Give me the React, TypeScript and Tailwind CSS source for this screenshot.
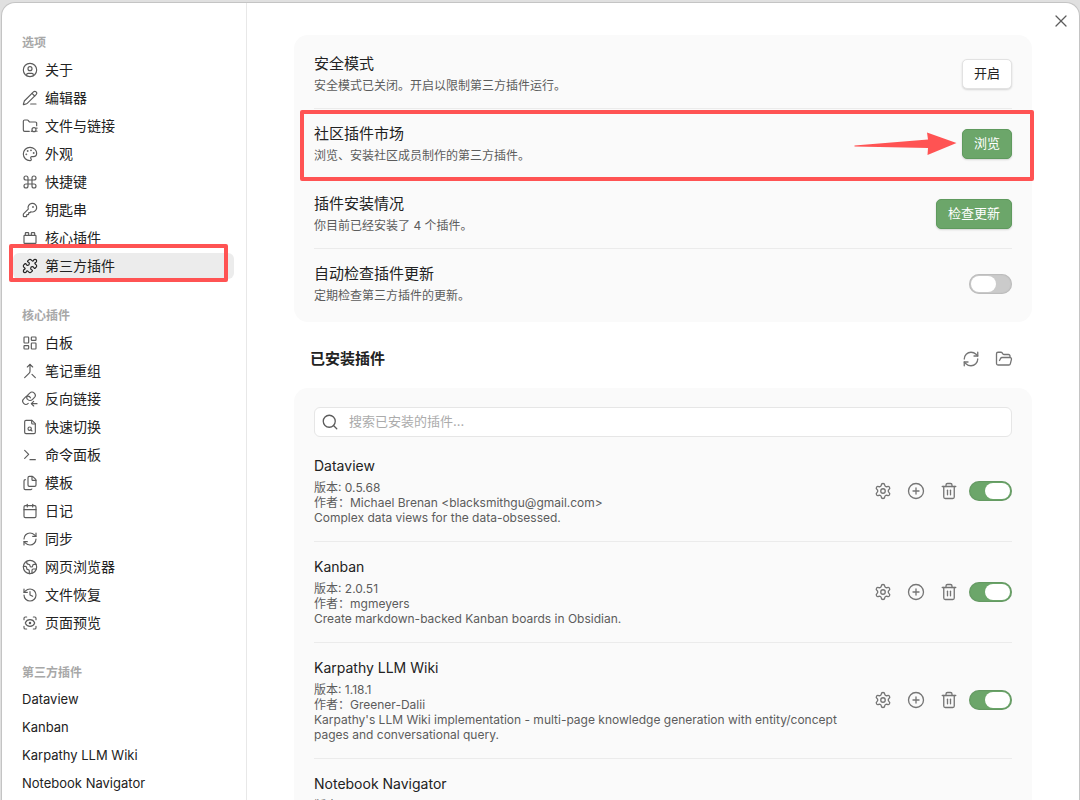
import React from "react";
import {
  Calendar,
  CirclePlus,
  CircleUser,
  Command,
  Earth,
  Files,
  FolderOpen,
  History,
  KeyRound,
  LayoutDashboard,
  Merge,
  Palette,
  PencilLine,
  Puzzle,
  RefreshCw,
  ScanEye,
  Search,
  Settings,
  Terminal,
  ToyBrick,
  Trash2,
  X,
} from "lucide-react";

interface IconProps {
  size?: number;
  strokeWidth?: number;
  className?: string;
}

type IconType = React.ComponentType<IconProps>;

function StrokeIcon({ size = 16, strokeWidth = 1.75, className, children }: IconProps & { children: React.ReactNode }) {
  return (
    <svg
      width={size}
      height={size}
      viewBox="0 0 24 24"
      fill="none"
      stroke="currentColor"
      strokeWidth={strokeWidth}
      strokeLinecap="round"
      strokeLinejoin="round"
      className={className}
      aria-hidden="true"
    >
      {children}
    </svg>
  );
}

function LinksIncoming(props: IconProps) {
  return (
    <StrokeIcon {...props}>
      <path d="M8.300 12.400a4.800 4.800 0 0 0 7.200.500l2.900-2.900a4.800 4.800 0 0 0-6.800-6.800l-3.100 3.100a4.800 4.800 0 0 0-.8 5.500" />
      <path d="M12.700 10.200a4.800 4.800 0 0 0-7.600-1.100L2.600 11.700a4.800 4.800 0 0 0 6.700 6.900" />
      <path d="M22.500 19h-8" />
      <path d="m17.500 15.500-3.500 3.500 3.500 3.500" />
    </StrokeIcon>
  );
}

function FolderRing(props: IconProps) {
  return (
    <StrokeIcon {...props}>
      <path d="M11 20H4a2 2 0 0 1-2-2V5a2 2 0 0 1 2-2h3.900a2 2 0 0 1 1.700.9l.8 1.200a2 2 0 0 0 1.700.9H20a2 2 0 0 1 2 2v3.500" />
      <circle cx="18" cy="17.500" r="3" />
      <path d="M22.300 14.800v.8" />
      <path d="M14 19.800v.4" />
      <path d="M22.300 19.800v.4" />
    </StrokeIcon>
  );
}

function FileLens(props: IconProps) {
  return (
    <StrokeIcon {...props}>
      <path d="M15 2H6a2 2 0 0 0-2 2v16a2 2 0 0 0 2 2h12a2 2 0 0 0 2-2V7Z" />
      <path d="M14.500 2v4a1.500 1.500 0 0 0 1.500 1.500h4" />
      <circle cx="11.500" cy="14.500" r="2.500" />
      <path d="M13.300 16.300 15 18" />
    </StrokeIcon>
  );
}

interface NavItem {
  label: string;
  icon?: IconType;
  active?: boolean;
}

const sections: { title: string; items: NavItem[] }[] = [
  {
    title: "选项",
    items: [
      { label: "关于", icon: CircleUser },
      { label: "编辑器", icon: PencilLine },
      { label: "文件与链接", icon: FolderRing },
      { label: "外观", icon: Palette },
      { label: "快捷键", icon: Command },
      { label: "钥匙串", icon: KeyRound },
      { label: "核心插件", icon: ToyBrick },
      { label: "第三方插件", icon: Puzzle, active: true },
    ],
  },
  {
    title: "核心插件",
    items: [
      { label: "白板", icon: LayoutDashboard },
      { label: "笔记重组", icon: Merge },
      { label: "反向链接", icon: LinksIncoming },
      { label: "快速切换", icon: FileLens },
      { label: "命令面板", icon: Terminal },
      { label: "模板", icon: Files },
      { label: "日记", icon: Calendar },
      { label: "同步", icon: RefreshCw },
      { label: "网页浏览器", icon: Earth },
      { label: "文件恢复", icon: History },
      { label: "页面预览", icon: ScanEye },
    ],
  },
  {
    title: "第三方插件",
    items: [
      { label: "Dataview" },
      { label: "Kanban" },
      { label: "Karpathy LLM Wiki" },
      { label: "Notebook Navigator" },
    ],
  },
];

const plugins = [
  {
    name: "Dataview",
    version: "0.5.68",
    author: "Michael Brenan <blacksmithgu@gmail.com>",
    description: "Complex data views for the data-obsessed.",
  },
  {
    name: "Kanban",
    version: "2.0.51",
    author: "mgmeyers",
    description: "Create markdown-backed Kanban boards in Obsidian.",
  },
  {
    name: "Karpathy LLM Wiki",
    version: "1.18.1",
    author: "Greener-Dalii",
    description:
      "Karpathy's LLM Wiki implementation - multi-page knowledge generation with entity/concept pages and conversational query.",
  },
  {
    name: "Notebook Navigator",
    version: "2.5.6",
    author: "Johan Sanneblad",
    description:
      "Replace the default file explorer with a clean two-pane interface featuring folder tree, tag browsing, file previews, keyboard navigation, drag-and-drop, pinned notes, and customizable display options.",
  },
];

function Toggle({ label, defaultChecked = false }: { label: string; defaultChecked?: boolean }) {
  return (
    <input
      type="checkbox"
      role="switch"
      aria-label={label}
      defaultChecked={defaultChecked}
      className="flex h-5 w-[43px] shrink-0 cursor-pointer appearance-none items-center rounded-full bg-[#cbcbcb] px-[2px] shadow-[inset_0_0_2px_rgba(0,0,0,0.25)] before:block before:h-4 before:w-[25px] before:rounded-full before:bg-white before:content-[''] checked:justify-end checked:bg-[#6ca66a]"
    />
  );
}

function IconButton({ label, icon: Icon }: { label: string; icon: IconType }) {
  return (
    <button type="button" aria-label={label} className="flex h-7 w-[33px] items-center justify-center text-[#757575]">
      <Icon size={18} strokeWidth={1.75} />
    </button>
  );
}

function ActionButton({ children, primary = false }: { children: React.ReactNode; primary?: boolean }) {
  return (
    <button
      type="button"
      className={
        primary
          ? "h-[30px] rounded-[5px] border border-[#5f9a5e] bg-[#6ca66a] px-[11px] text-[13px] text-white shadow-[0_1px_2px_rgba(0,0,0,0.15)]"
          : "h-[30px] rounded-[5px] border border-[#e2e2e2] bg-white px-[11px] text-[13px] text-[#222222] shadow-[0_1px_2px_rgba(0,0,0,0.15)]"
      }
    >
      {children}
    </button>
  );
}

function SettingRow({
  name,
  description,
  children,
  overlay,
}: {
  name: string;
  description: string;
  children: React.ReactNode;
  overlay?: React.ReactNode;
}) {
  return (
    <div className="relative flex h-[70px] items-center justify-between border-b border-[#ebebeb] last:border-b-0">
      <div>
        <div className="text-[15px] leading-5 text-[#222222]">{name}</div>
        <div className="mt-1 text-xs leading-4 text-[#5c5c5c]">{description}</div>
      </div>
      {children}
      {overlay}
    </div>
  );
}

function Sidebar() {
  return (
    <nav className="flex w-[245px] shrink-0 flex-col gap-[22px] overflow-hidden border-r border-[#e8e8e8] pt-[25px] pr-3 pl-[11px]">
      {sections.map((section) => (
        <section key={section.title}>
          <h2 className="h-7 px-[9px] text-xs leading-[29px] font-semibold text-[#a8a8a8]">{section.title}</h2>
          <ul className="flex flex-col gap-[2px] pt-px">
            {section.items.map(({ label, icon: Icon, active }) => (
              <li key={label} className="relative">
                <button
                  type="button"
                  aria-current={active ? "page" : undefined}
                  className={
                    active
                      ? "flex h-[26px] w-full items-center gap-[7px] rounded-md bg-[#ececec] px-[9px] text-left text-sm whitespace-nowrap text-[#222222]"
                      : Icon
                        ? "flex h-[26px] w-full items-center gap-[7px] rounded-md px-[9px] text-left text-sm whitespace-nowrap text-[#222222]"
                        : "flex h-[26px] w-full items-center rounded-md px-[9px] text-left text-[13px] whitespace-nowrap text-[#222222]"
                  }
                >
                  {Icon && <Icon size={16} strokeWidth={1.75} className={active ? "text-[#222222]" : "text-[#5c5c5c]"} />}
                  {label}
                </button>
                {active && (
                  <span className="pointer-events-none absolute -top-[9px] right-[6px] -bottom-[3px] -left-1 z-10 rounded-xs border-4 border-[#ff5353]" />
                )}
              </li>
            ))}
          </ul>
        </section>
      ))}
    </nav>
  );
}

function PluginItem({ plugin }: { plugin: (typeof plugins)[number] }) {
  return (
    <li className="flex items-center justify-between gap-5 border-b border-[#ebebeb] pt-[15px] pb-4 last:border-b-0">
      <div className="min-w-0 flex-1">
        <h3 className="text-sm leading-5 text-[#222222]">{plugin.name}</h3>
        <div className="mt-1 text-xs leading-[15px] text-[#5c5c5c]">
          <div>版本: {plugin.version}</div>
          <div>作者：{plugin.author}</div>
          <div>{plugin.description}</div>
        </div>
      </div>
      <div className="flex shrink-0 items-center">
        <IconButton label="设置" icon={Settings} />
        <IconButton label="快捷键" icon={CirclePlus} />
        <IconButton label="卸载" icon={Trash2} />
        <div className="ml-1 flex">
          <Toggle label={plugin.name} defaultChecked />
        </div>
      </div>
    </li>
  );
}

export default function App() {
  return (
    <div className="h-screen overflow-hidden bg-[#e0e0e0] pt-[2px] pl-px font-['Inter','Noto_Sans_CJK_SC',sans-serif]">
      <div className="relative flex h-full overflow-hidden rounded-t-[14px] border border-b-0 border-[#c4c4c4] bg-white">
        <Sidebar />
        <main className="min-w-0 flex-1 overflow-hidden px-[47px] pt-8">
          <section className="rounded-[14px] bg-[#fafafa] px-5 pt-1 pb-[3px]">
            <SettingRow name="安全模式" description="安全模式已关闭。开启以限制第三方插件运行。">
              <ActionButton>开启</ActionButton>
            </SettingRow>
            <SettingRow
              name="社区插件市场"
              description="浏览、安装社区成员制作的第三方插件。"
              overlay={
                <>
                  <span className="pointer-events-none absolute top-px -right-[22px] -bottom-[3px] -left-[14px] rounded-xs border-4 border-[#ff5353]" />
                  <svg width="104" height="24" viewBox="0 0 104 24" className="pointer-events-none absolute top-[23px] right-[54px]" aria-hidden="true">
                    <path d="M0.500 13.500 74 7.500 73 0.500 102.500 11 73.500 23 74 16 0.500 14.500Z" fill="#ff5353" />
                  </svg>
                </>
              }
            >
              <ActionButton primary>浏览</ActionButton>
            </SettingRow>
            <SettingRow name="插件安装情况" description="你目前已经安装了 4 个插件。">
              <ActionButton primary>检查更新</ActionButton>
            </SettingRow>
            <SettingRow name="自动检查插件更新" description="定期检查第三方插件的更新。">
              <Toggle label="自动检查插件更新" />
            </SettingRow>
          </section>

          <div className="flex h-[66px] items-center justify-between pt-2 pr-3 pl-4">
            <h2 className="text-[15px] font-bold text-[#222222]">已安装插件</h2>
            <div className="flex">
              <IconButton label="检查更新" icon={RefreshCw} />
              <IconButton label="打开插件文件夹" icon={FolderOpen} />
            </div>
          </div>

          <section className="rounded-t-[14px] bg-[#fafafa] px-5 pt-[19px]">
            <label className="flex h-[30px] items-center gap-[10px] rounded-md border border-[#e6e6e6] bg-white px-[6px]">
              <Search size={18} strokeWidth={1.75} className="shrink-0 text-[#5c5c5c]" />
              <input
                type="text"
                aria-label="搜索已安装的插件"
                placeholder="搜索已安装的插件..."
                className="min-w-0 flex-1 bg-transparent text-[13px] text-[#222222] outline-none placeholder:text-[#ababab]"
              />
            </label>
            <ul className="pt-1">
              {plugins.map((plugin) => (
                <PluginItem key={plugin.name} plugin={plugin} />
              ))}
            </ul>
          </section>
        </main>
        <button type="button" aria-label="关闭" className="absolute top-2 right-2 text-[#5c5c5c]">
          <X size={20} strokeWidth={1.5} />
        </button>
      </div>
    </div>
  );
}
